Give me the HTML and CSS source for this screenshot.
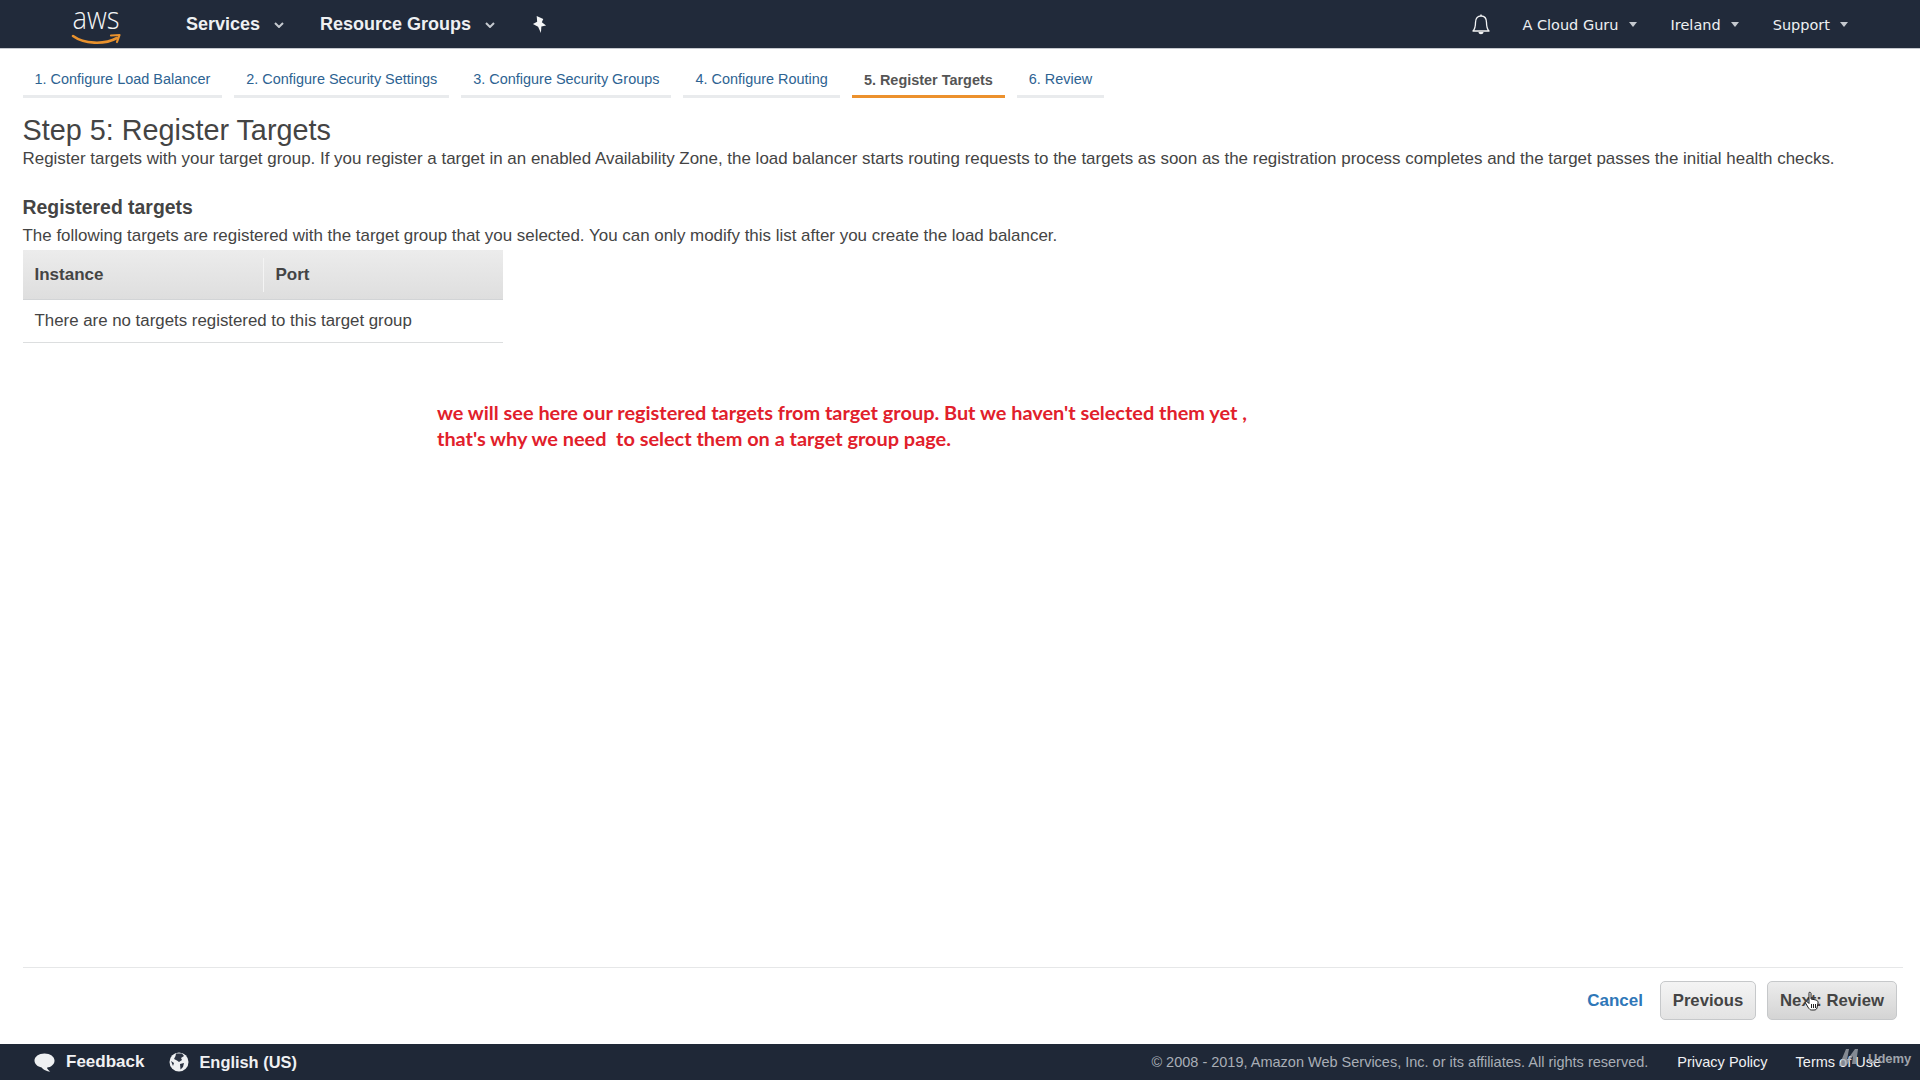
FILE: index.html
```html
<!DOCTYPE html>
<html lang="en">
<head>
<meta charset="utf-8">
<title>Step 5: Register Targets</title>
<link rel="stylesheet" href="styles.css">
</head>
<body>
<header class="topbar">
  <div class="nav-left">
    <svg class="logo" viewBox="0 0 52 48" width="52" height="48"><text x="26" y="29" class="logo-text" text-anchor="middle" textLength="47" lengthAdjust="spacingAndGlyphs">aws</text><path d="M3 36 C14 44 34 45 47 38" fill="none" stroke="#e8912d" stroke-width="2.6" stroke-linecap="round"/><path d="M41 35.500 L49.500 35 L47 42" fill="none" stroke="#e8912d" stroke-width="2.2" stroke-linecap="round" stroke-linejoin="round"/></svg>
    <span class="nav-main services">Services<svg class="chev" viewBox="0 0 10 6" width="10" height="6"><path d="M1 1 L5 5 L9 1" fill="none" stroke="#c5c9cf" stroke-width="2"/></svg></span>
    <span class="nav-main groups">Resource Groups<svg class="chev" viewBox="0 0 10 6" width="10" height="6"><path d="M1 1 L5 5 L9 1" fill="none" stroke="#c5c9cf" stroke-width="2"/></svg></span>
    <svg class="pin" viewBox="0 0 16 20" width="15" height="19"><path d="M5 1 L12 4 L10.500 7.500 L15 11 L10 12 L9.500 19 L6.500 12.500 L1 9.500 L5.500 7 Z" fill="#f4f5f6"/></svg>
  </div>
  <div class="nav-right">
    <svg class="bell" viewBox="0 0 20 23" width="20" height="23"><path d="M2 18 C4 16 4.500 13.500 4.500 9.500 C4.500 5 7 3 10 3 C13 3 15.500 5 15.500 9.500 C15.500 13.500 16 16 18 18 Z" fill="none" stroke="#f2f3f4" stroke-width="1.300" stroke-linejoin="round"/><path d="M7.500 19 H12.500 C12.500 22 7.500 22 7.500 19 Z M9.300 3 V1.500 H10.700 V3" fill="#f2f3f4"/></svg>
    <span class="nav-item">A Cloud Guru<i class="caret"></i></span>
    <span class="nav-item">Ireland<i class="caret"></i></span>
    <span class="nav-item">Support<i class="caret"></i></span>
  </div>
</header>

<main class="main">
  <nav class="steps">
    <a class="step">1. Configure Load Balancer</a>
    <a class="step">2. Configure Security Settings</a>
    <a class="step">3. Configure Security Groups</a>
    <a class="step">4. Configure Routing</a>
    <a class="step current">5. Register Targets</a>
    <a class="step">6. Review</a>
  </nav>
  <h1 class="title">Step 5: Register Targets</h1>
  <p class="lead">Register targets with your target group. If you register a target in an enabled Availability Zone, the load balancer starts routing requests to the targets as soon as the registration process completes and the target passes the initial health checks.</p>
  <h2 class="subtitle">Registered targets</h2>
  <p class="sublead">The following targets are registered with the target group that you selected. You can only modify this list after you create the load balancer.</p>
  <div class="table">
    <div class="thead"><div class="th col-a">Instance</div><div class="th col-b">Port</div></div>
    <div class="empty">There are no targets registered to this target group</div>
  </div>
  <p class="note">we will see here our registered targets from target group. But we haven't selected them yet ,<br>that's why we need&nbsp; to select them on a target group page.</p>
  <div class="actions">
    <a class="cancel">Cancel</a>
    <button class="btn prev">Previous</button>
    <button class="btn next">Next: Review</button>
  </div>
</main>

<footer class="footer">
  <div class="foot-left">
    <span class="foot-item feedback"><svg viewBox="0 0 24 22" width="23" height="21"><path d="M12 1.500 C18 1.500 22.500 4.800 22.500 9 C22.500 13 19 16 14.500 16.500 C15 18 16.500 19.500 18 20.500 C14.500 20.500 10.500 18.500 9 16.300 C4.800 15.500 1.500 12.800 1.500 9 C1.500 4.800 6 1.500 12 1.500 Z" fill="#eef0f2"/></svg>Feedback</span>
    <span class="foot-item lang"><svg viewBox="0 0 20 20" width="20" height="20"><circle cx="10" cy="10" r="9.500" fill="#eef0f2"/><path d="M7 1.500 L13 1.500 L15 4 L12 6 L13 8 L10 10 L8 8.500 L5 7 L6.500 4 Z M11 12 L15 11 L14 15 L11.500 17.500 Z M2 9 L5 11 L4 14 Z" fill="#2b3342"/></svg>English (US)</span>
  </div>
  <div class="foot-right">
    <span class="copyright">© 2008 - 2019, Amazon Web Services, Inc. or its affiliates. All rights reserved.</span>
    <span class="foot-link">Privacy Policy</span>
    <span class="foot-link">Terms of Use</span>
  </div>
</footer>

<svg class="hand" viewBox="0 0 16 20" width="16" height="20"><path d="M5 1.500 C6 1 7 1.500 7 2.500 V8 L12 9 C13.500 9.500 14.500 10.500 14 12 L13 17 C12.500 18.500 11.500 19 10 19 H7.500 C6 19 5.500 18 4.500 17 L1.500 12 C1 11 2.500 10 3.500 11 L5 12.500 V2.500 Z" fill="#fff" stroke="#222" stroke-width="1"/><path d="M7.500 13 V17 M9.500 13 V17 M11.500 13 V17" stroke="#222" stroke-width="1"/></svg>
<div class="watermark"><svg viewBox="0 0 26 24" width="26" height="24"><path d="M2 20 L9 3 L12 3 L10 14 L18 3 L21 3 L19 18 L15 18 L16 10 L9 20 Z" fill="#a6aab1" fill-opacity="0.75"/></svg><span>Udemy</span></div>
</body>
</html>
```
FILE: styles.css
```css
* { box-sizing: border-box; }
html, body { margin: 0; height: 100%; }
body {
  width: 1920px;
  height: 1080px;
  overflow: hidden;
  display: flex;
  flex-direction: column;
  background: #fff;
  color: #333;
  font-family: "Liberation Sans", Arial, sans-serif;
  position: relative;
}
.topbar {
  height: 49px;
  flex: none;
  background: #212a3a;
  border-bottom: 1px solid #c5c8ce;
  display: flex;
  justify-content: space-between;
  align-items: center;
  color: #fff;
}
.nav-left { display: flex; align-items: center; padding-left: 70px; }
.logo { display: block; overflow: visible; }
.logo-text { font: 300 31px "Open Sans", sans-serif; fill: #f4f5f6; }
.nav-main {
  font-size: 18px;
  font-weight: 700;
  color: #eef0f2;
  display: flex;
  align-items: center;
  gap: 14px;
  padding-top: 1px;
}
.services { margin-left: 64px; }
.groups { margin-left: 36px; }
.pin { margin-left: 37px; }
.nav-right { display: flex; align-items: center; padding-right: 72px; }
.bell { margin-right: 31px; }
.nav-item {
  font-family: "DejaVu Sans", sans-serif;
  font-size: 14.5px;
  color: #eef0f2;
  display: flex;
  align-items: center;
  gap: 10px;
  margin-right: 34px;
  padding-top: 1px;
}
.nav-item:last-child { margin-right: 0; }
.caret {
  width: 0;
  height: 0;
  border-left: 4.5px solid transparent;
  border-right: 4.5px solid transparent;
  border-top: 5px solid #c5c9cf;
}
.main {
  flex: 1;
  display: flex;
  flex-direction: column;
  padding: 0 17px 0 22.500px;
  min-height: 0;
}
.steps { display: flex; gap: 12px; margin-top: 11px; height: 38px; }
.step {
  padding: 11px 12px 0;
  height: 38px;
  font-size: 14.45px;
  color: #2d6392;
  border-bottom: 3px solid #e9ebed;
  white-space: nowrap;
}
.current {
  color: #555;
  font-weight: 700;
  padding-top: 12px;
  border-bottom-color: #ec912d;
}
.title { margin: 16px 0 0; font-size: 28.8px; font-weight: 400; line-height: 32px; color: #444; }
.lead { margin: 3px 0 0; font-size: 16.96px; line-height: 20px; color: #444; white-space: nowrap; }
.subtitle { margin: 27px 0 0; font-size: 19.4px; font-weight: 700; line-height: 22px; color: #444; }
.sublead { margin: 8px 0 0; font-size: 16.96px; line-height: 20px; color: #444; white-space: nowrap; }
.table { width: 480px; margin-top: 4px; }
.thead {
  height: 50px;
  display: flex;
  align-items: center;
  background: linear-gradient(#ececec, #dedede);
  border-bottom: 1px solid #d2d4d6;
}
.th { font-size: 17px; font-weight: 700; color: #444; padding-left: 12px; height: 34px; line-height: 34px; }
.col-a { width: 241px; border-right: 1px solid #f4f4f4; }
.col-b { flex: 1; }
.empty {
  height: 43px;
  padding-left: 12px;
  line-height: 42px;
  font-size: 16.85px;
  color: #444;
  border-bottom: 1px solid #dcdedf;
}
.note {
  margin: 56px 0 0 414.500px;
  font-family: Lato, sans-serif;
  font-weight: 700;
  font-size: 19.9px;
  line-height: 26px;
  color: #e1202b;
  white-space: nowrap;
}
.actions {
  margin-top: auto;
  height: 77px;
  border-top: 1px solid #e6e7e8;
  display: flex;
  justify-content: flex-end;
  align-items: flex-start;
  padding: 13px 6px 0 0;
}
.cancel { font-size: 17px; font-weight: 700; color: #2f77b8; line-height: 39px; margin-right: 17px; }
.btn {
  height: 39px;
  border: 1px solid #c6c8ca;
  border-radius: 5px;
  background: linear-gradient(#f4f4f4, #e3e3e3);
  font: 700 16.7px "Liberation Sans", Arial, sans-serif;
  color: #444;
  padding: 0;
}
.prev { width: 96px; margin-right: 11px; }
.next { width: 130px; background: linear-gradient(#ececec, #d4d4d4); }
.footer {
  height: 36px;
  flex: none;
  background: #1f2837;
  display: flex;
  justify-content: space-between;
  align-items: center;
  color: #f0f1f3;
}
.foot-left { display: flex; align-items: center; padding-left: 33px; gap: 25px; }
.foot-item { display: flex; align-items: center; gap: 10px; font-weight: 700; }
.feedback { font-size: 17px; }
.lang { font-size: 16.4px; }
.foot-right { display: flex; align-items: center; padding-right: 39px; font-size: 14.5px; }
.copyright { color: #a9aeb6; margin-right: 29px; }
.foot-link { margin-right: 28px; color: #f0f1f3; }
.foot-link:last-child { margin-right: 0; }
.hand { position: absolute; left: 1804px; top: 991px; }
.watermark {
  position: absolute;
  left: 1837px;
  top: 1046px;
  display: flex;
  align-items: center;
  gap: 5px;
  font-size: 13px;
  font-weight: 700;
  color: #a0a4ab;
}
```
